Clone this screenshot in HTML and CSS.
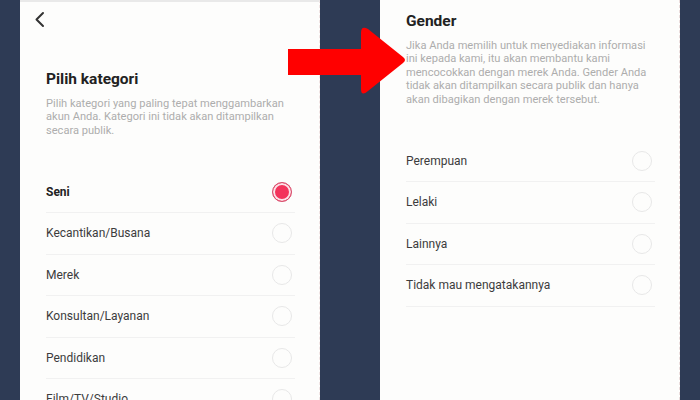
FILE: index.html
```html
<!DOCTYPE html>
<html lang="id">
<head>
  <meta charset="UTF-8" />
  <meta name="viewport" content="width=device-width, initial-scale=1.0" />
  <title>Pilih kategori &amp; Gender</title>
  <link rel="stylesheet" href="styles.css">
</head>
<body>
  <div class="screens">
    <div class="panel panel-left">
      <div class="topbar">
        <svg class="back" width="12" height="18" viewBox="0 0 12 18">
          <path d="M9 2 L2.5 8.5 L9 15" fill="none" stroke="#333" stroke-width="2" stroke-linecap="round" stroke-linejoin="round"/>
        </svg>
      </div>
      <h1 class="title title-left">Pilih kategori</h1>
      <p class="desc">Pilih kategori yang paling tepat menggambarkan akun Anda. Kategori ini tidak akan ditampilkan secara publik.</p>
      <ul class="options">
        <li class="option selected"><span>Seni</span><span class="radio"></span></li>
        <li class="option"><span>Kecantikan/Busana</span><span class="radio"></span></li>
        <li class="option"><span>Merek</span><span class="radio"></span></li>
        <li class="option"><span>Konsultan/Layanan</span><span class="radio"></span></li>
        <li class="option"><span>Pendidikan</span><span class="radio"></span></li>
        <li class="option"><span>Film/TV/Studio</span><span class="radio"></span></li>
      </ul>
    </div>

    <div class="panel panel-right">
      <h1 class="title title-right">Gender</h1>
      <p class="desc">Jika Anda memilih untuk menyediakan informasi ini kepada kami, itu akan membantu kami mencocokkan dengan merek Anda. Gender Anda tidak akan ditampilkan secara publik dan hanya akan dibagikan dengan merek tersebut.</p>
      <ul class="options">
        <li class="option"><span>Perempuan</span><span class="radio"></span></li>
        <li class="option"><span>Lelaki</span><span class="radio"></span></li>
        <li class="option"><span>Lainnya</span><span class="radio"></span></li>
        <li class="option"><span>Tidak mau mengatakannya</span><span class="radio"></span></li>
      </ul>
    </div>
  </div>

  <svg class="arrow" width="700" height="400" viewBox="0 0 700 400">
    <path d="M288 49 H361 V33 Q361 25 368 29 L403 57 Q407 60 403 63 L368 91 Q361 97 361 89 V75 H288 Z" fill="#ff0000"/>
  </svg>
</body>
</html>
```

FILE: styles.css
```css
* { box-sizing: border-box; }
html, body { margin: 0; height: 400px; overflow: hidden; }
body { background: #2e3b55; font-family: Roboto, "Noto Sans", sans-serif; position: relative; }

.screens { display: flex; gap: 60px; padding: 0 20px; height: 400px; }
.panel { width: 300px; height: 400px; background: #fdfdfc; padding: 0 24px 0 26px; overflow: hidden; }
.panel-left { border-top: 2px solid #e9e9e9; border-right: 1px dashed #f0e4e4; }
.panel-right { border-right: 1px dashed #eadcdc; }

.topbar { height: 38px; margin-left: -12px; padding-top: 9px; }
.back { display: block; }

.title { font-size: 15.5px; line-height: 22px; font-weight: 700; color: #222; margin: 0 0 7px; }
.title-left { margin-top: 27.5px; }
.title-right { padding-top: 9.5px; }

.desc { font-size: 11.1px; line-height: 13.5px; color: #adadad; margin: 0; }

.options { list-style: none; margin: 34.5px 0 0; padding: 0; }
.option { display: flex; align-items: center; justify-content: space-between; height: 41.5px; border-bottom: 1px solid #f1f1f1; padding-right: 3px; font-size: 12px; color: #3c3c3c; }
.option.selected { font-weight: 700; color: #222; }

.radio { width: 20px; height: 20px; border-radius: 50%; border: 1.5px solid #e8e8e8; }
.selected .radio { border: 1.5px solid #d6506e; background: #f3335b; box-shadow: inset 0 0 0 2px #fbe3e8; }

.arrow { position: absolute; left: 0; top: 0; }
```
